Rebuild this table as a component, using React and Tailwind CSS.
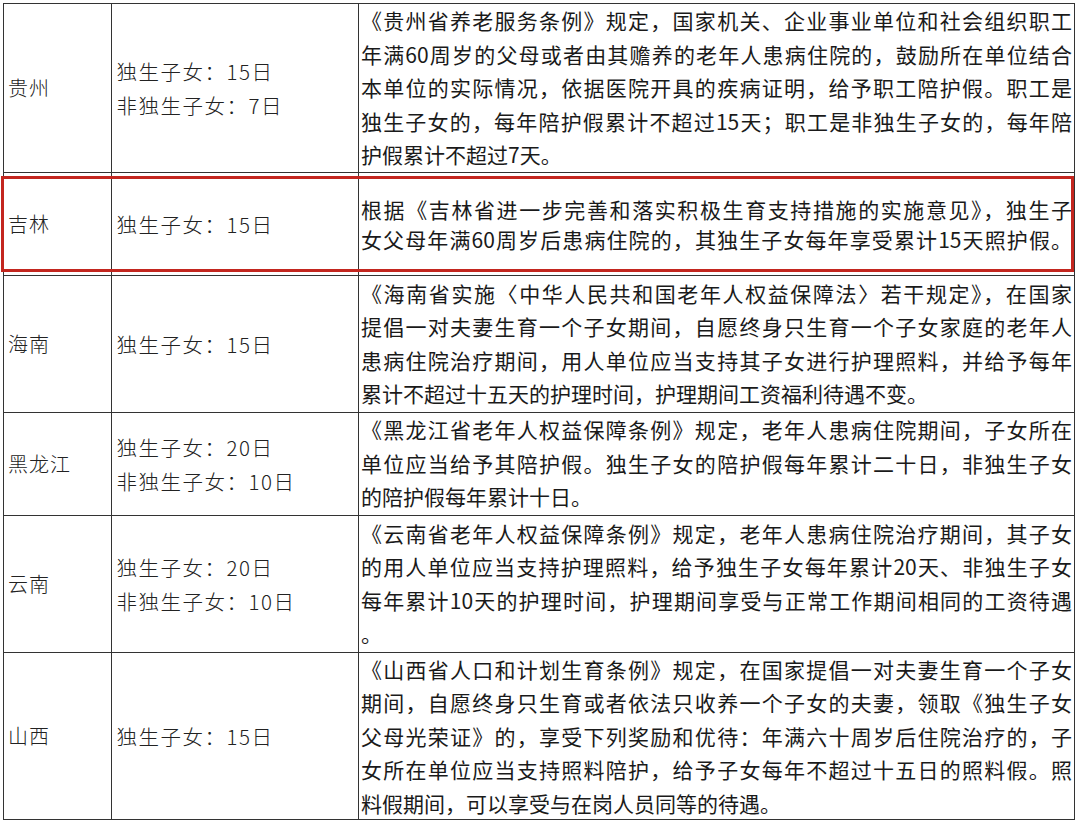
import React from 'react'

const rows = [
    {
        name: '贵州',
        days: ['独生子女：15日', '非独生子女：7日'],
        h: 'h-[167.5px]',
        lines: [
            '《贵州省养老服务条例》规定，国家机关、企业事业单位和社会组织职工',
            '年满60周岁的父母或者由其赡养的老年人患病住院的，鼓励所在单位结合',
            '本单位的实际情况，依据医院开具的疾病证明，给予职工陪护假。职工是',
            '独生子女的，每年陪护假累计不超过15天；职工是非独生子女的，每年陪',
            '护假累计不超过7天。',
        ],
    },
    {
        name: '吉林',
        days: ['独生子女：15日'],
        h: 'h-[103px]',
        highlight: true,
        lines: [
            '根据《吉林省进一步完善和落实积极生育支持措施的实施意见》，独生子',
            '女父母年满60周岁后患病住院的，其独生子女每年享受累计15天照护假。',
        ],
    },
    {
        name: '海南',
        days: ['独生子女：15日'],
        h: 'h-[137px]',
        lines: [
            '《海南省实施〈中华人民共和国老年人权益保障法〉若干规定》，在国家',
            '提倡一对夫妻生育一个子女期间，自愿终身只生育一个子女家庭的老年人',
            '患病住院治疗期间，用人单位应当支持其子女进行护理照料，并给予每年',
            '累计不超过十五天的护理时间，护理期间工资福利待遇不变。',
        ],
    },
    {
        name: '黑龙江',
        days: ['独生子女：20日', '非独生子女：10日'],
        h: 'h-[103px]',
        lines: [
            '《黑龙江省老年人权益保障条例》规定，老年人患病住院期间，子女所在',
            '单位应当给予其陪护假。独生子女的陪护假每年累计二十日，非独生子女',
            '的陪护假每年累计十日。',
        ],
    },
    {
        name: '云南',
        days: ['独生子女：20日', '非独生子女：10日'],
        h: 'h-[137px]',
        lines: [
            '《云南省老年人权益保障条例》规定，老年人患病住院治疗期间，其子女',
            '的用人单位应当支持护理照料，给予独生子女每年累计20天、非独生子女',
            '每年累计10天的护理时间，护理期间享受与正常工作期间相同的工资待遇',
            '。',
        ],
    },
    {
        name: '山西',
        days: ['独生子女：15日'],
        h: 'h-[167.5px]',
        lines: [
            '《山西省人口和计划生育条例》规定，在国家提倡一对夫妻生育一个子女',
            '期间，自愿终身只生育或者依法只收养一个子女的夫妻，领取《独生子女',
            '父母光荣证》的，享受下列奖励和优待：年满六十周岁后住院治疗的，子',
            '女所在单位应当支持照料陪护，给予子女每年不超过十五日的照料假。照',
            '料假期间，可以享受与在岗人员同等的待遇。',
        ],
    },
]

const Row = ({ row, first }) => {
    const last = row.lines.length - 1
    return (
        <div className={`relative grid grid-cols-[107.5px_247.5px_1fr] ${row.h} ${first ? '' : 'border-t-[1.5px] border-[#333]'}`}>
            <div className="flex items-center border-r-[1.5px] border-[#333] pl-[4px] text-[20px] tracking-[1px] font-light text-[#222]">
                {row.name}
            </div>
            <div className="flex flex-col justify-center border-r-[1.5px] border-[#333] pl-[5px] text-[20.5px] leading-[34px] tracking-[1.5px] font-light text-[#222]">
                {row.days.map((d) => (
                    <div key={d}>{d}</div>
                ))}
            </div>
            <div className={`flex flex-col justify-center px-[2px] text-[21px] text-[#1a1a1a] ${row.highlight ? 'leading-[30px]' : 'leading-[33.5px]'}`}>
                {row.lines.map((l, i) => (
                    <div
                        key={i}
                        className={i < last || row.highlight ? 'text-justify [text-align-last:justify]' : 'text-left'}
                    >
                        {l}
                    </div>
                ))}
            </div>
            {row.highlight && (
                <div className="pointer-events-none absolute top-[3.5px] bottom-[2.5px] left-[-3.5px] right-[0.5px] border-[3px] border-[#c3261f]" />
            )}
        </div>
    )
}

const App = () => {
    return (
        <div className="min-h-[822px] w-[1080px] bg-white font-['Noto_Sans_CJK_SC','Noto_Sans',sans-serif]">
            <div className="ml-[3px] mt-[3px] w-[1072px] border-[1.5px] border-[#333]">
                {rows.map((r, i) => (
                    <Row key={r.name} row={r} first={i === 0} />
                ))}
            </div>
        </div>
    )
}

export default App
